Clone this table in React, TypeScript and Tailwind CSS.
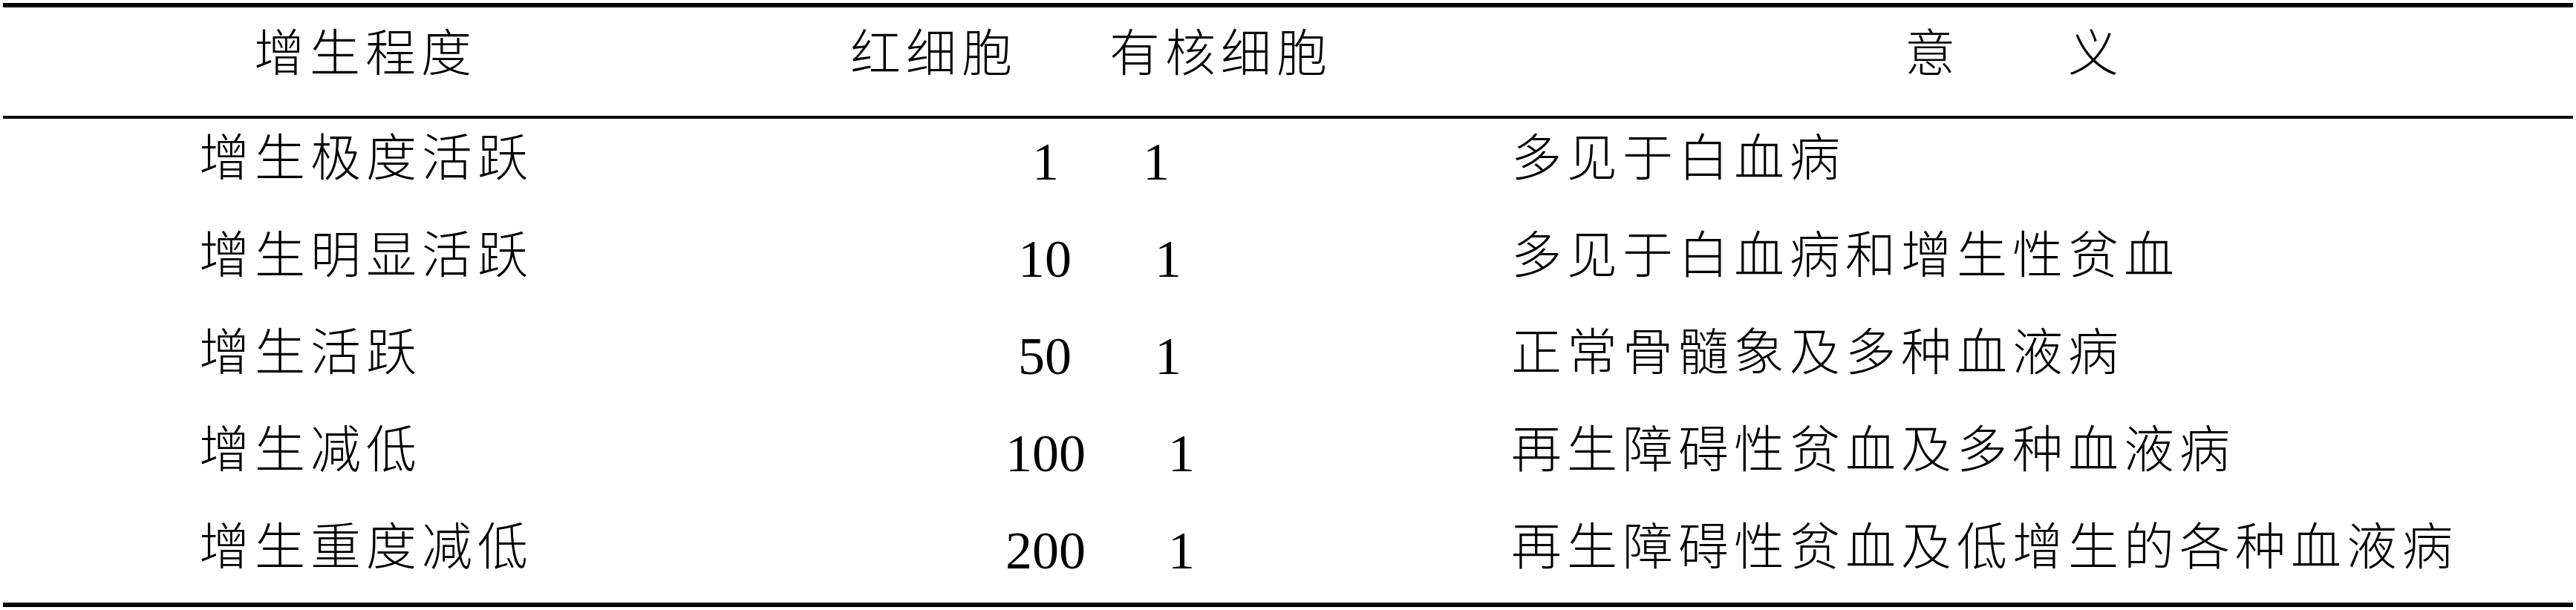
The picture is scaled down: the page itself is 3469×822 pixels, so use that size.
import React from 'react';

type Row = {
  grade: string;
  red: string;
  nucleated: string;
  meaning: string;
  numPad: string;
  numWidth: string;
};

const rows: Row[] = [
  { grade: '增生极度活跃', red: '1', nucleated: '1', meaning: '多见于白血病', numPad: 'pl-[410px]', numWidth: 'w-[149px]' },
  { grade: '增生明显活跃', red: '10', nucleated: '1', meaning: '多见于白血病和增生性贫血', numPad: 'pl-[391px]', numWidth: 'w-[184px]' },
  { grade: '增生活跃', red: '50', nucleated: '1', meaning: '正常骨髓象及多种血液病', numPad: 'pl-[391px]', numWidth: 'w-[184px]' },
  { grade: '增生减低', red: '100', nucleated: '1', meaning: '再生障碍性贫血及多种血液病', numPad: 'pl-[374px]', numWidth: 'w-[219px]' },
  { grade: '增生重度减低', red: '200', nucleated: '1', meaning: '再生障碍性贫血及低增生的各种血液病', numPad: 'pl-[374px]', numWidth: 'w-[219px]' },
];

export default function App() {
  return (
    <div className="w-[3469px] h-[822px] bg-white text-black font-['Liberation_Serif','Noto_Sans_CJK_SC',serif]">
      <div className="mx-[4px] pt-[4px]">
        {/* header */}
        <div className="grid grid-cols-[976px_1055px_1fr] h-[156px] border-t-[6px] border-b-[4px] border-black text-[68px] leading-none tracking-[7px] font-light">
          <div className="pt-[29px] text-center">增生程度</div>
          <div className="pt-[29px] pl-[165px] flex">
            <span>红细胞</span>
            <span className="ml-[124px]">有核细胞</span>
          </div>
          <div className="pt-[29px] pl-[530px] flex">
            <span>意</span>
            <span className="ml-[145px]">义</span>
          </div>
        </div>

        {/* body */}
        <div className="border-b-[6px] border-black">
          {rows.map((r) => (
            <div key={r.grade} className="grid grid-cols-[976px_1055px_1fr] items-start h-[131px] last:h-[128px]">
              <div className="pt-[20px] pl-[264px] text-[68px] leading-none tracking-[7px] font-light">{r.grade}</div>
              <div className={`pt-[22px] ${r.numPad} flex text-[72px] leading-none`}>
                <span className={r.numWidth}>{r.red}</span>
                <span>{r.nucleated}</span>
              </div>
              <div className="pt-[20px] text-[68px] leading-none tracking-[7px] font-light whitespace-nowrap">{r.meaning}</div>
            </div>
          ))}
        </div>
      </div>
    </div>
  );
}
